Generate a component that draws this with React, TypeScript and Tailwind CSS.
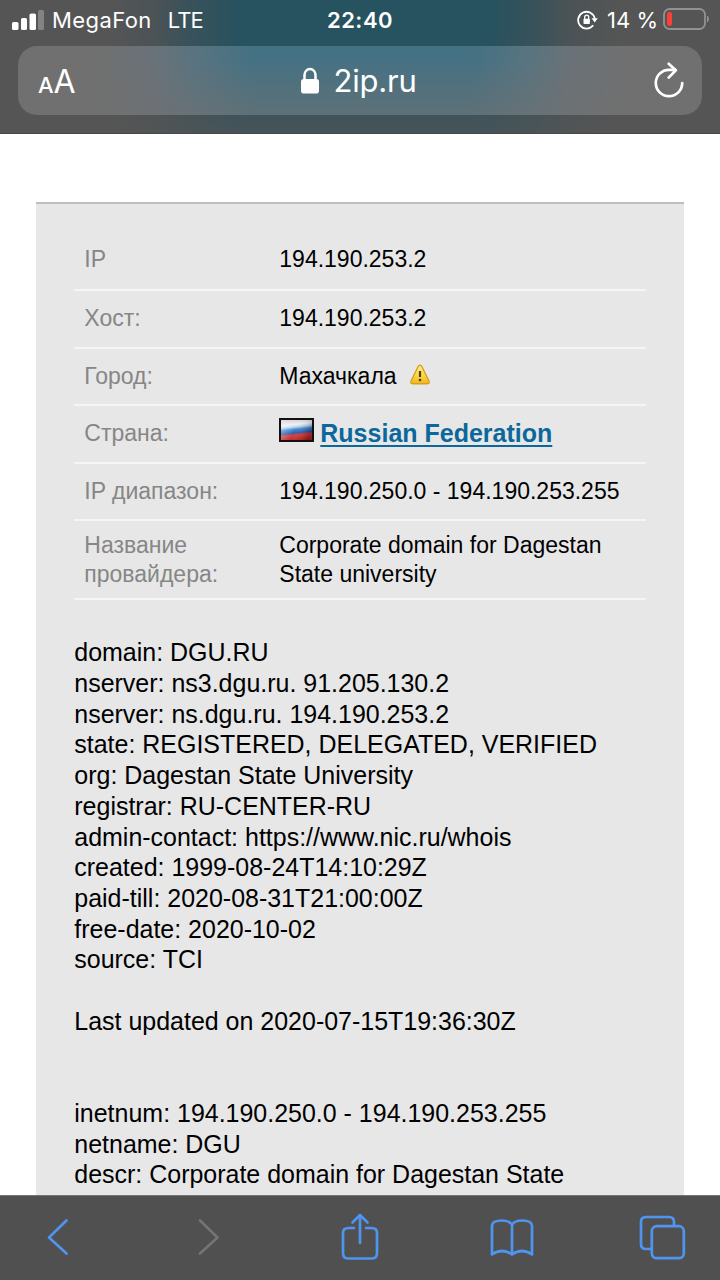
import type { ReactNode } from "react";

const whois = [
  "domain: DGU.RU",
  "nserver: ns3.dgu.ru. 91.205.130.2",
  "nserver: ns.dgu.ru. 194.190.253.2",
  "state: REGISTERED, DELEGATED, VERIFIED",
  "org: Dagestan State University",
  "registrar: RU-CENTER-RU",
  "admin-contact: https://www.nic.ru/whois",
  "created: 1999-08-24T14:10:29Z",
  "paid-till: 2020-08-31T21:00:00Z",
  "free-date: 2020-10-02",
  "source: TCI",
  "",
  "Last updated on 2020-07-15T19:36:30Z",
  "",
  "",
  "inetnum: 194.190.250.0 - 194.190.253.255",
  "netname: DGU",
  "descr: Corporate domain for Dagestan State",
];

export default function App() {
  return (
    <div className="flex h-[1280px] w-[720px] flex-col overflow-hidden bg-white font-['Liberation_Sans',Arial,sans-serif]">
      <BrowserHeader />
      <main className="flex min-h-0 flex-1 flex-col overflow-hidden pt-[67.5px] pl-[36.3px]">
        <section className="h-[1100px] w-[648px] shrink-0 border-t-2 border-[#bebebe] bg-[#e7e7e7] px-[38px] text-black">
          <dl className="pt-[26.5px] text-[23px] leading-[29px]">
            <Row label="IP" className="h-[61px]">194.190.253.2</Row>
            <Row label="Хост:" className="h-[57.5px]">194.190.253.2</Row>
            <Row label="Город:" className="h-[57.5px]">
              <span className="flex items-center gap-[12px]">
                Махачкала
                <WarningIcon />
              </span>
            </Row>
            <Row label="Страна:" className="h-[57.5px]">
              <span className="flex items-center gap-[6px]">
                <FlagIcon />
                <a className="text-[25px] font-bold text-[#0b679c] underline decoration-2 underline-offset-[3px]">
                  Russian Federation
                </a>
              </span>
            </Row>
            <Row label="IP диапазон:" className="h-[57.5px]">194.190.250.0 - 194.190.253.255</Row>
            <Row label="Название провайдера:" className="h-[79px]">
              Corporate domain for Dagestan State university
            </Row>
          </dl>
          <div className="pt-[37.2px] text-[24.97px] leading-[30.72px] whitespace-nowrap">
            {whois.map((line, index) => (
              <p key={index} className="h-[30.72px]">{line}</p>
            ))}
          </div>
        </section>
      </main>
      <BrowserToolbar />
    </div>
  );
}

function Row({ label, className, children }: { label: string; className: string; children: ReactNode }) {
  return (
    <div className={`flex items-center border-b-2 border-[#f5f5f5] pl-[10px] ${className}`}>
      <dt className="w-[195px] shrink-0 pr-[50px] text-[#868686]">{label}</dt>
      <dd className="flex-1 pr-[10px]">{children}</dd>
    </div>
  );
}

function BrowserHeader() {
  return (
    <header className="flex h-[134px] shrink-0 flex-col border-b border-[#474747] bg-[linear-gradient(to_bottom,#55555500_30%,#555555a8_100%),linear-gradient(to_right,#555555_110px,#4b5356_155px,#38525a_190px,#27525f_240px,#27525f_490px,#38525a_535px,#4b5356_570px,#555555_620px)] font-[Inter,sans-serif] text-white">
      <div className="grid h-[46px] shrink-0 grid-cols-3 items-center pt-[1px] pb-[7px] text-[22px] leading-[30px]">
        <div className="flex items-center pl-[12px]">
          <svg width="33" height="22" viewBox="0 0 33 22" fill="white">
            <rect x="0" y="13" width="6.5" height="8" rx="1.6" />
            <rect x="9" y="9" width="6" height="12" rx="1.6" />
            <rect x="17.5" y="4.5" width="6.5" height="16.5" rx="1.6" />
            <rect x="26" y="1" width="6" height="20" rx="1.6" opacity=".27" />
          </svg>
          <span className="ml-[7px] tracking-[0.4px]">MegaFon</span>
          <span className="ml-[16px] tracking-[-0.8px]">LTE</span>
        </div>
        <span className="text-center font-semibold tracking-[0.5px]">22:40</span>
        <div className="flex items-center justify-end pr-[10px]">
          <RotationLockIcon />
          <span className="ml-[9px] whitespace-nowrap">14 %</span>
          <svg className="ml-[5px]" width="47" height="24" viewBox="0 0 47 24">
            <rect x="1" y="1" width="41" height="20" rx="5.5" fill="none" stroke="#929292" strokeWidth="1.8" />
            <rect x="4" y="4" width="5" height="14" rx="2.2" fill="#fb4037" />
            <path d="M44.5 8 Q46.5 11 44.5 14 Z" fill="#929292" stroke="#929292" />
          </svg>
        </div>
      </div>
      <div className="mx-[18px] grid h-[69px] shrink-0 grid-cols-3 items-center rounded-[19px] bg-[linear-gradient(to_bottom,#70707000_15%,#70707098_100%),linear-gradient(to_right,#707070_82px,#69727a_137px,#587480_177px,#447183_235px,#447183_455px,#587480_510px,#697278_550px,#707070_610px)]">
        <div className="flex items-baseline pt-[2px] pl-[20px] leading-none">
          <span className="text-[22px] font-medium">A</span>
          <span className="text-[32px]">A</span>
        </div>
        <div className="flex items-center justify-center gap-[14px] pr-[2px]">
          <svg width="18" height="28" viewBox="0 0 18 28">
            <rect x="0" y="12" width="18" height="14.5" rx="2.8" fill="white" />
            <path d="M3.5 13V8a5.5 6 0 0 1 11 0V13" fill="none" stroke="white" strokeWidth="2.5" />
          </svg>
          <span className="text-[31px] leading-[38px] tracking-[-0.2px]">2ip.ru</span>
        </div>
        <div className="flex justify-end pr-[17px]">
          <svg width="32" height="38" viewBox="0 0 32 38" fill="none" stroke="white" strokeWidth="2.7" strokeLinecap="round" strokeLinejoin="round">
            <path d="M29.2 21A13.2 13.2 0 1 1 16 7.8H22" />
            <path d="M15.7 1.8 22.8 8.3 15.7 15.6" />
          </svg>
        </div>
      </div>
    </header>
  );
}

function RotationLockIcon() {
  return (
    <svg width="21" height="20" viewBox="0 0 21 20" fill="none">
      <path d="M16.2 15.3A8.4 8.4 0 1 1 17.8 8.6" stroke="white" strokeWidth="1.8" />
      <path d="M14.6 8.2h6.2l-3.1 4.3Z" fill="white" />
      <rect x="6.5" y="8.7" width="6.4" height="5.4" rx=".8" fill="white" />
      <path d="M7.7 9V7.3a2 2.2 0 0 1 4 0V9" stroke="white" strokeWidth="1.3" />
    </svg>
  );
}

function WarningIcon() {
  return (
    <svg className="relative -top-[2px]" width="22" height="21" viewBox="0 0 22 21">
      <defs>
        <linearGradient id="warning" x2="0" y2="1">
          <stop stopColor="#fff08b" />
          <stop offset=".55" stopColor="#fbd746" />
          <stop offset="1" stopColor="#efb51b" />
        </linearGradient>
      </defs>
      <path d="M11 1.2q1.2 0 2 1.6l6.8 14q1.2 3-1.4 3H3.6q-2.6 0-1.4-3L9 2.8q.8-1.6 2-1.6Z" fill="url(#warning)" stroke="#d99e20" strokeWidth="1.4" />
      <path d="M11 7v6" stroke="#4b4020" strokeWidth="2.2" />
      <circle cx="11" cy="16" r="1.3" fill="#4b4020" />
    </svg>
  );
}

function FlagIcon() {
  return (
    <svg className="relative -top-[4px] shrink-0" width="35" height="24" viewBox="0 0 35 24">
      <defs>
        <linearGradient id="flag" x1=".42" x2=".58" y2="1">
          <stop stopColor="#c6c6ca" />
          <stop offset=".25" stopColor="#f0f0f3" />
          <stop offset=".36" stopColor="#b5d1eb" />
          <stop offset=".46" stopColor="#3b8ad2" />
          <stop offset=".62" stopColor="#2758a8" />
          <stop offset=".72" stopColor="#d8363a" />
          <stop offset="1" stopColor="#b71b1c" />
        </linearGradient>
        <linearGradient id="flag-shine" y2=".3">
          <stop stopColor="#fff" stopOpacity=".45" />
          <stop offset=".55" stopColor="#fff" stopOpacity=".04" />
          <stop offset="1" stopColor="#000" stopOpacity=".25" />
        </linearGradient>
      </defs>
      <rect x="1" y="1" width="33" height="22" fill="url(#flag)" />
      <rect x="1" y="1" width="33" height="22" fill="url(#flag-shine)" stroke="#111" strokeWidth="2" />
    </svg>
  );
}

function BrowserToolbar() {
  return (
    <nav className="flex h-[85px] shrink-0 items-start border-t border-[#747474] bg-[#505050] pt-[14px] pl-[46px] text-[#4f94ef]">
      <ToolbarIcon className="w-[22px]">
        <path d="M20.5 10.5 3 27.5 20.5 43.5" />
      </ToolbarIcon>
      <ToolbarIcon className="ml-[129px] w-[22px] text-[#747474]">
        <path d="M3 10.5 20.5 27.5 3 43.5" />
      </ToolbarIcon>
      <ToolbarIcon className="ml-[122px] w-[38px]">
        <path d="M13 18H7.5Q2 18 2 23V43.5q0 5 5.5 5h23q5.5 0 5.5-5V23q0-5-5.5-5H25M19 33V5M11.5 12.5 19 5l7.5 7.5" />
      </ToolbarIcon>
      <ToolbarIcon className="ml-[111px] w-[44px]">
        <path d="M22 14.5Q19 10.5 12 10.5 2 10.5 2 16v28.5q10-7 20 0 10-7 20 0V16q0-5.5-10-5.5-7 0-10 4V44" />
      </ToolbarIcon>
      <ToolbarIcon className="ml-[105px] w-[46px]">
        <path d="M12 39H7q-5 0-5-5V12q0-5 5-5h23q5 0 5 5v4" />
        <rect x="12.8" y="16.2" width="32" height="32" rx="5" />
      </ToolbarIcon>
    </nav>
  );
}

function ToolbarIcon({ className, children }: { className: string; children: ReactNode }) {
  return (
    <svg className={`h-[54px] shrink-0 overflow-visible ${className}`} fill="none" stroke="currentColor" strokeWidth="2.7" strokeLinecap="round" strokeLinejoin="round">
      {children}
    </svg>
  );
}
